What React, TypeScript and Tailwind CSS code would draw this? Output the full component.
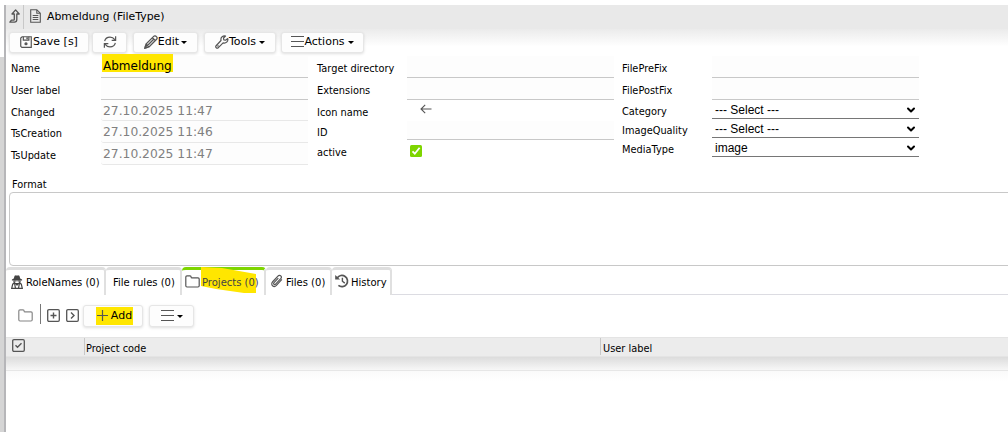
import type { ReactNode } from "react";
import { ChevronDown } from "lucide-react";

type IconProps = { className?: string };

function Svg({ className = "", box = "0 0 16 16", children }: IconProps & { box?: string; children: ReactNode }) {
  return (
    <svg viewBox={box} className={`shrink-0 ${className}`} fill="none" stroke="#555" strokeWidth={1.3}>
      {children}
    </svg>
  );
}

const LevelUpIcon = ({ className }: IconProps) => (
  <Svg className={className} box="0 0 11 14">
    <path d="M6.6.9 10.2 5H7.8v5.6c0 1.5-.9 2.6-2.4 2.6H.9l1.5-2.1h2.2c.4 0 .7-.2.7-.7V5H3z" strokeLinejoin="round" strokeWidth={1.3} />
  </Svg>
);

const DocIcon = ({ className }: IconProps) => (
  <Svg className={className} box="0 0 11 14">
    <path d="M.7.7h6.1l3.5 3.5v9.1H.7zM6.8.7v3.5h3.5M2.7 6.5h5.6M2.7 8.5h5.6M2.7 10.5h5.6" strokeWidth={1.1} />
  </Svg>
);

const SaveIcon = ({ className }: IconProps) => (
  <Svg className={className} box="0 0 13 13">
    <path d="M.8 2.3v8.9l1.3 1.2h10.1V.8H2.3z" />
    <path d="M3.6.8v3.7h6V.8" />
    <path d="M7.7 1.3v2.2" strokeWidth={1.6} />
    <circle cx="6.5" cy="8.4" r="1.1" fill="#555" />
  </Svg>
);

const RefreshIcon = ({ className }: IconProps) => (
  <Svg className={className} box="0 0 14 13">
    <path d="M1.2 5.5C1.8 3 4.2 1.2 7 1.2c2.2 0 3.9.9 5.2 2.8M13.1 .4V4.7H8.8M12.8 7.5c-.6 2.5-3 4.3-5.8 4.3-2.2 0-3.9-.9-5.2-2.8M.9 12.6V8.3h4.3" />
  </Svg>
);

const PencilIcon = ({ className }: IconProps) => (
  <Svg className={className} box="0 0 14 14">
    <path d="m1 13 1-4L9.7 1.4c.7-.7 1.9-.6 2.7.2s.9 2 .2 2.7L5 12zM2 9l3 3M8.4 2.7l3 3M3.5 10.5l6.2-6.2" />
    <path d="m1 13 .5-1.9 1.4 1.4z" fill="#555" />
  </Svg>
);

const WrenchIcon = ({ className }: IconProps) => (
  <Svg className={className} box="0 0 14 14">
    <path d="M12.8 3.5 10.6 5.2 8.8 4.8 8.5 3 10.5 1C8.3.3 6 1.7 5.9 4.1L6 5.5.9 11c-.7 1.4.9 2.7 2.2 1.9l5-5c2.8.8 5.3-1.4 4.7-4.4z" strokeLinejoin="round" strokeWidth={1.2} />
    <path d="m2.5 11.5 1-1" />
  </Svg>
);

const BarsIcon = ({ className }: IconProps) => (
  <Svg className={className} box="0 0 13 11">
    <path d="M0 .5h13M0 5.5h13M0 10.5h13" strokeWidth={1} />
  </Svg>
);

const ArrowLeftIcon = ({ className }: IconProps) => (
  <Svg className={className} box="0 0 12 10">
    <path d="M11.5 5H1.2M5.2.8 1 5l4.2 4.2" strokeWidth={1.1} />
  </Svg>
);

const FolderIcon = ({ className }: IconProps) => (
  <Svg className={className} box="0 0 15 13">
    <path d="M.8 10.8V2c0-.7.5-1.2 1.2-1.2h3c.7 0 1.1.5 1.1 1.1 0 .5.4.9.9.9h6c.7 0 1.2.5 1.2 1.2v6.8c0 .7-.5 1.2-1.2 1.2H2c-.7 0-1.2-.5-1.2-1.2z" strokeWidth={1.2} />
  </Svg>
);

const SpyIcon = ({ className }: IconProps) => (
  <Svg className={className} box="0 0 12 14">
    <path d="M2.8 3.6 3.6.8 5 .3l1 .5 1-.5 1.4.5.8 2.8 1.9.8v1H.9v-1z" fill="#444" stroke="none" />
    <path d="M3 5.4v1.7L4.5 8.7h3L9 7.1V5.4M3.2 8 1.7 9.2.7 13.3h10.6l-1-4.1L8.8 8M3.6 8.5l.9 4.8M8.4 8.5l-.9 4.8M4.8 8.7 6 10l1.2-1.3" stroke="#444" strokeWidth={1.2} />
    <path d="M3.2 5.4h2.3v1.2H3.2zm3.3 0h2.3v1.2H6.5z" fill="#444" stroke="none" />
  </Svg>
);

const ClipIcon = ({ className }: IconProps) => (
  <Svg className={className} box="0 0 13 14">
    <path d="M11.8 5.3 5.9 11.7c-1.2 1.3-3 1.5-4.2.4s-1.1-3 .1-4.3L7.5 1.7c.9-1 2.3-1.1 3.1-.3s.8 2.1-.1 3.1L5 10.3c-.5.6-1.3.7-1.8.2s-.4-1.2.1-1.8l4.6-4.9" strokeWidth={1.3} />
  </Svg>
);

const HistoryIcon = ({ className }: IconProps) => (
  <Svg className={className} box="0 0 14 14">
    <path d="M2.2 4A5.6 5.6 0 1 1 3.4 11.4" strokeWidth={1.7} />
    <path d="M.2.9v4.7h4.9z" fill="#555" stroke="none" />
    <path d="M7.4 3.7v3.5l2.4 1.9" strokeWidth={1.4} />
  </Svg>
);

const BoxedIcon = ({ className, d }: IconProps & { d: string }) => (
  <Svg className={className} box="0 0 13 13">
    <rect x=".7" y=".7" width="11.6" height="11.6" rx="1.2" strokeWidth={1.3} />
    <path d={d} strokeWidth={1.4} />
  </Svg>
);

const Caret = () => (
  <span className="border-x-[3px] border-t-[3px] border-x-transparent border-t-black" />
);

function Button({ className, children }: { className: string; children: ReactNode }) {
  return (
    <button
      className={`flex shrink-0 items-center justify-center rounded-[3px] border border-[#e6e6e6] bg-[#fdfdfd] text-[11px] shadow-[0_1px_3px_rgba(0,0,0,0.13)] ${className}`}
    >
      {children}
    </button>
  );
}

function Field({ label, row, children }: { label: string; row: string; children?: ReactNode }) {
  return (
    <div className={`flex ${row}`}>
      <label className="flex w-[90px] shrink-0 items-center pt-[5px] text-[9.8px] whitespace-nowrap">{label}</label>
      {children}
    </div>
  );
}

const Input = ({ children }: { children?: ReactNode }) => (
  <div className="flex w-[207px] shrink-0 items-end border-b border-[#c8c8c8] bg-[#fdfdfd] text-[12px]">{children}</div>
);

const ReadOnly = ({ value }: { value: string }) => (
  <div className="flex w-[207px] shrink-0 items-center rounded-bl-[3px] border-b border-[#e8e8e8] bg-[#fdfdfd] pt-0.5 pl-0.5 text-[12.3px] leading-none text-[#808080]">
    {value}
  </div>
);

const Select = ({ value }: { value: string }) => (
  <div className="flex w-[207px] shrink-0 items-center justify-between border-b border-[#767676] pt-0.5 pr-[2px] pl-[3px] font-['Liberation_Sans',sans-serif] text-[12px] leading-none">
    {value}
    <ChevronDown size={12} strokeWidth={4} />
  </div>
);

function Tab({ className, active, children }: { className: string; active?: boolean; children: ReactNode }) {
  return (
    <div
      className={`flex h-[28px] shrink-0 items-center rounded-t-[4px] border-t-[3px] border-r-2 border-r-[#e0e0e0] text-[10px] whitespace-nowrap ${
        active ? "border-t-[#7ed500] text-[#444]" : "border-t-[#dedede]"
      } ${className}`}
    >
      {children}
    </div>
  );
}

export default function App() {
  return (
    <div className="flex h-[432px] w-[1008px] overflow-hidden bg-white pt-[5px] font-['DejaVu_Sans',sans-serif] text-black">
      <div className="flex w-1 shrink-0 flex-col">
        <div className="h-[52px]" />
        <div className="grow bg-[#d5d5d5]" />
      </div>
      <div className="w-[2px] shrink-0 bg-[#b6b6b9]" />

      <main className="flex w-[1002px] shrink-0 flex-col">
        <header className="flex h-6 shrink-0 items-center bg-[#e9e9e9] text-[10.9px]">
          <LevelUpIcon className="mb-0.5 ml-[3px] h-[14px] w-[11px]" />
          <div className="ml-[3px] h-full w-px bg-[#c8c8c8]" />
          <DocIcon className="mb-0.5 ml-1.5 h-[14px] w-[11px]" />
          <h1 className="ml-1.5 pt-px">Abmeldung (FileType)</h1>
        </header>

        <div className="flex h-[27px] shrink-0 items-start bg-linear-to-b from-[#ebebeb] to-white to-65% pt-[3px] pl-[3px]">
          <Button className="h-[21px] w-[80px]"><SaveIcon className="mb-0.5 size-3" /><span className="ml-px">Save [s]</span></Button>
          <Button className="ml-[3px] h-[21px] w-[35px]"><RefreshIcon className="mb-0.5 h-3 w-[14px]" /></Button>
          <Button className="ml-1.5 h-[21px] w-[65px]"><PencilIcon className="mb-0.5 size-[14px]" />Edit<span className="w-[2px]" /><Caret /></Button>
          <Button className="ml-1.5 h-[21px] w-[72px]"><WrenchIcon className="mb-0.5 size-[14px]" />Tools<span className="w-[3px]" /><Caret /></Button>
          <Button className="ml-[5px] h-[21px] w-[83px]"><BarsIcon className="mb-0.5 h-[11px] w-[13px]" />Actions<span className="w-[3px]" /><Caret /></Button>
        </div>

        <section className="flex h-[121px] shrink-0 pl-[5px]">
          <div className="w-[306px]">
            <Field label="Name" row="h-[22px]">
              <Input>
                <span className="mb-[5px] ml-px h-[18px] bg-[#ffe600] px-px pt-[6px] leading-[12px]">Abmeldung</span>
              </Input>
            </Field>
            <Field label="User label" row="h-[22px]"><Input /></Field>
            <Field label="Changed" row="h-[21px]"><ReadOnly value="27.10.2025 11:47" /></Field>
            <Field label="TsCreation" row="h-[22px]"><ReadOnly value="27.10.2025 11:46" /></Field>
            <Field label="TsUpdate" row="h-[22px]"><ReadOnly value="27.10.2025 11:47" /></Field>
          </div>
          <div className="w-[305px]">
            <Field label="Target directory" row="h-[22px]"><Input /></Field>
            <Field label="Extensions" row="h-[22px]"><Input /></Field>
            <Field label="Icon name" row="h-[21px]"><ArrowLeftIcon className="mt-1 ml-[13px] h-[10px] w-3" /></Field>
            <Field label="ID" row="h-[19px]"><Input /></Field>
            <Field label="active" row="h-[22px]">
              <svg viewBox="0 0 12 12" className="mt-[5px] ml-[3px] size-3">
                <rect width="12" height="12" rx="1.5" fill="#7ed500" />
                <path d="m2.5 6.3 2.3 2.4L9.6 2.8" fill="none" stroke="white" strokeWidth="1.8" />
              </svg>
            </Field>
          </div>
          <div>
            <Field label="FilePreFix" row="h-[22px]"><Input /></Field>
            <Field label="FilePostFix" row="h-[22px]"><Input /></Field>
            <Field label="Category" row="h-[19px]"><Select value="--- Select ---" /></Field>
            <Field label="ImageQuality" row="h-[19px]"><Select value="--- Select ---" /></Field>
            <Field label="MediaType" row="h-[19px]"><Select value="image" /></Field>
          </div>
        </section>

        <label className="h-[15px] shrink-0 pl-1.5 text-[9.8px] leading-[15px]">Format</label>
        <div className="ml-[3px] h-[74px] w-[1020px] shrink-0 rounded-[4px] border border-[#c8c8c8]" />

        <nav className="mt-[1px] flex h-[28px] shrink-0">
          <Tab className="w-[100px] pl-[5px]"><SpyIcon className="mr-[3px] mb-0.5 h-[14px] w-3" />RoleNames (0)</Tab>
          <Tab className="w-[76px] pl-[7px]">File rules (0)</Tab>
          <Tab className="w-[84px] pl-[3px]" active>
            <FolderIcon className="mr-[2px] mb-[3px] h-[13px] w-[15px]" />
            <span className="relative">
              <svg viewBox="0 0 56 26" className="absolute -top-[8px] -left-px h-[26px] w-[56px]">
                <path d="M0 0 21 1 55 7V26H43L15 22 0 19z" fill="#ffe600" />
              </svg>
              <span className="relative">Projects (0)</span>
            </span>
          </Tab>
          <Tab className="w-[66px] pl-[5px]"><ClipIcon className="mr-[3px] mb-[3px] h-[14px] w-3" />Files (0)</Tab>
          <Tab className="w-[60px] pl-[3px]"><HistoryIcon className="mr-[2px] mb-[3px] size-[14px]" />History</Tab>
          <div className="grow border-b border-[#dcdce2]" />
        </nav>

        <div className="flex h-[42px] shrink-0 items-center pl-3">
          <FolderIcon className="mb-0.5 h-[13px] w-[15px] opacity-70" />
          <div className="mb-1 ml-[7px] h-5 w-px bg-[#777]" />
          <BoxedIcon className="mb-0.5 ml-[6px] size-[13px]" d="M6.5 3.5v6M3.5 6.5h6" />
          <BoxedIcon className="mb-0.5 ml-[6px] size-[13px]" d="m5 3.5 3 3-3 3" />
          <Button className="ml-1 h-[22px] w-[60px]">
            <span className="ml-[3px] flex h-[18px] items-center bg-[#ffe600] px-px">
              <svg viewBox="0 0 11 11" className="mr-[3px] mb-0.5 size-[11px]"><path d="M5.5 0v11M0 5.5h11" stroke="#555" strokeWidth="1.2" /></svg>
              Add
            </span>
          </Button>
          <Button className="ml-[6px] h-[22px] w-[45px]"><BarsIcon className="mr-[3px] mb-0.5 h-[11px] w-[13px]" /><Caret /></Button>
        </div>

        <div className="flex h-[20px] shrink-0 border-y border-[#e4e4e4] bg-[#ececec] text-[9.8px]">
          <div className="w-[78px] pt-px pl-1.5"><BoxedIcon className="size-[13px]" d="m3.5 6.2 2 2 4-4" /></div>
          <div className="mb-px w-[516px] border-l border-[#c8c8c8] pt-[5px] pl-px leading-[12px]">Project code</div>
          <div className="mb-px border-l border-[#c8c8c8] pt-[5px] pl-[2px] leading-[12px]">User label</div>
        </div>
        <div className="h-[14px] shrink-0 border-b border-[#e6e6e6] bg-linear-to-b from-[#dcdcdc] to-[#f7f7f7]" />
        <div className="h-[10px] shrink-0 bg-linear-to-b from-[#fafafa] to-white" />
      </main>
    </div>
  );
}
